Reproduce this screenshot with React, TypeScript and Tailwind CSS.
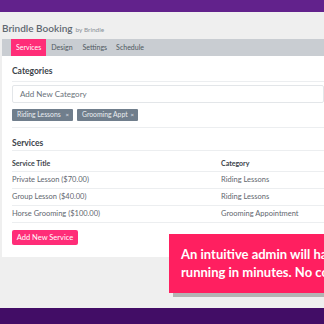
import React from "react";

export default function App() {
  const rows = [
    ["Private Lesson ($70.00)", "Riding Lessons"],
    ["Group Lesson ($40.00)", "Riding Lessons"],
    ["Horse Grooming ($100.00)", "Grooming Appointment"],
  ];
  return (
    <div
      className="relative w-[324px] h-[324px] overflow-hidden bg-[#efefef] flex flex-col"
      style={{ fontFamily: "Lato, 'Noto Sans', sans-serif" }}
    >
      <div className="h-[12px] bg-[#62228c] shrink-0" />
      <div className="h-[27px] flex items-end pb-[6px] pl-[2px] shrink-0">
        <span className="text-[10px] font-semibold text-[#5f6871] leading-none">Brindle Booking</span>
        <span className="text-[6.5px] text-[#8a9199] ml-[3px] leading-none">by Brindle</span>
      </div>
      <div className="ml-[2px] h-[17px] bg-[#c9cdd2] flex items-stretch pl-[9px] shrink-0 text-[7px] text-[#4f5861]">
        <div className="bg-[#ff2d78] text-white px-[5px] flex items-center">Services</div>
        <div className="px-[5px] flex items-center">Design</div>
        <div className="px-[5px] flex items-center">Settings</div>
        <div className="px-[4px] flex items-center">Schedule</div>
      </div>
      <div className="ml-[2px] bg-white h-[201px] shrink-0 pl-[10px] pt-[11px] text-[#5f676f]">
        <div className="text-[8.5px] font-bold text-[#3c434a] leading-none">Categories</div>
        <div className="h-px bg-[#eceef0] mt-[5px]" />
        <div className="mt-[3px] h-[18px] border border-[#e3e6e9] rounded-[2px] flex items-center pl-[7px] text-[8px] text-[#6a727a]">
          Add New Category
        </div>
        <div className="flex gap-[4px] mt-[6px]">
          <div className="h-[12px] bg-[#707e8c] rounded-[1px] text-[#e9edf1] text-[6.8px] flex items-center pl-[5px] pr-[4px] w-[61px] justify-between">
            <span>Riding Lessons</span>
            <span className="text-[6px]">×</span>
          </div>
          <div className="h-[12px] bg-[#707e8c] rounded-[1px] text-[#e9edf1] text-[6.8px] flex items-center pl-[5px] pr-[4px] w-[61px] justify-between">
            <span>Grooming Appt</span>
            <span className="text-[6px]">×</span>
          </div>
        </div>
        <div className="h-px bg-[#eceef0] mt-[6px]" />
        <div className="text-[8.5px] font-bold text-[#3c434a] leading-none mt-[11px]">Services</div>
        <div className="h-px bg-[#eceef0] mt-[3px]" />
        <div className="flex h-[20px] items-end pb-[4px] text-[7px] font-bold text-[#3c434a] leading-none">
          <div className="w-[209px]">Service Title</div>
          <div>Category</div>
        </div>
        {rows.map((r) => (
          <React.Fragment key={r[0]}>
            <div className="h-px bg-[#eceef0]" />
            <div className="flex h-[16px] items-center text-[7.5px]">
              <div className="w-[209px]">{r[0]}</div>
              <div>{r[1]}</div>
            </div>
          </React.Fragment>
        ))}
        <div className="h-px bg-[#eceef0]" />
        <div className="mt-[7px] w-[66px] h-[15px] bg-[#ff2d78] rounded-[2px] text-white text-[7.5px] flex items-center justify-center">
          Add New Service
        </div>
      </div>
      <div className="flex-1" />
      <div className="h-[16px] bg-[#420d66] shrink-0" />
      <div className="absolute left-[169px] top-[234px] w-[200px] h-[59px] bg-[#ff1f60] shadow-[4px_4px_0_rgba(0,0,0,0.25)] pl-[12px] pt-[11px] text-white font-bold text-[13px] leading-[18px] whitespace-nowrap">
        <div>An intuitive admin will have you up and</div>
        <div>running in minutes. No code needed.</div>
      </div>
    </div>
  );
}
